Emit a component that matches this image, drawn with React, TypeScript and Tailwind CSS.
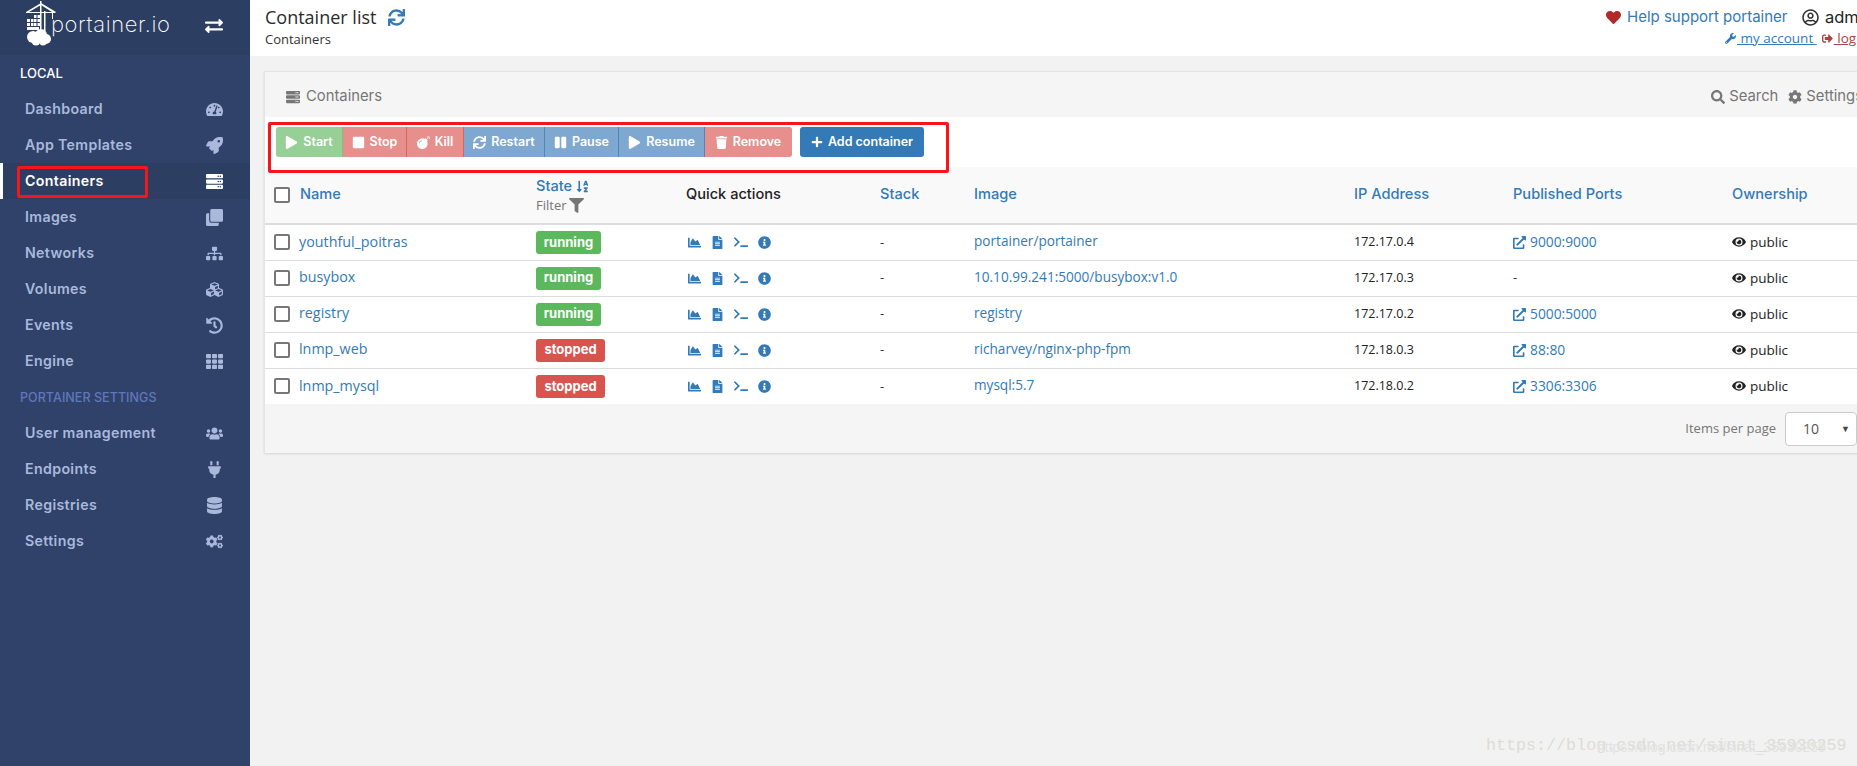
import type { ReactNode } from "react";
import {
  FaBomb,
  FaChartArea,
  FaClone,
  FaCog,
  FaCogs,
  FaCubes,
  FaDatabase,
  FaExchangeAlt,
  FaExternalLinkAlt,
  FaEye,
  FaFileAlt,
  FaFilter,
  FaHeart,
  FaHistory,
  FaInfoCircle,
  FaPause,
  FaPlay,
  FaPlug,
  FaPlus,
  FaRegUserCircle,
  FaRocket,
  FaSearch,
  FaServer,
  FaSignOutAlt,
  FaSitemap,
  FaSortAlphaDown,
  FaStop,
  FaSync,
  FaTachometerAlt,
  FaTerminal,
  FaTh,
  FaTrash,
  FaUsers,
  FaWrench,
} from "react-icons/fa";

const mainNav = [
  { label: "Dashboard", icon: <FaTachometerAlt /> },
  { label: "App Templates", icon: <FaRocket /> },
  { label: "Containers", icon: <FaServer />, active: true },
  { label: "Images", icon: <FaClone /> },
  { label: "Networks", icon: <FaSitemap /> },
  { label: "Volumes", icon: <FaCubes /> },
  { label: "Events", icon: <FaHistory /> },
  { label: "Engine", icon: <FaTh /> },
];

const settingsNav = [
  { label: "User management", icon: <FaUsers /> },
  { label: "Endpoints", icon: <FaPlug /> },
  { label: "Registries", icon: <FaDatabase /> },
  { label: "Settings", icon: <FaCogs /> },
];

const actions = [
  { label: "Start", icon: <FaPlay />, width: "w-[67px]", color: "bg-[#96d096] border-[#7cc47c]" },
  { label: "Stop", icon: <FaStop />, width: "w-[64px]", color: "bg-[#e68f8c] border-[#d9635f]" },
  { label: "Kill", icon: <FaBomb />, width: "w-[57px]", color: "bg-[#e68f8c] border-[#d9635f]" },
  { label: "Restart", icon: <FaSync />, width: "w-[81px]", color: "bg-[#7ea8d0] border-[#4f86bb]" },
  { label: "Pause", icon: <FaPause />, width: "w-[74px]", color: "bg-[#7ea8d0] border-[#4f86bb]" },
  { label: "Resume", icon: <FaPlay />, width: "w-[86px]", color: "bg-[#7ea8d0] border-[#4f86bb]" },
  { label: "Remove", icon: <FaTrash />, width: "w-[87px]", color: "bg-[#e68f8c] border-[#e68f8c]" },
];

const containers = [
  { name: "youthful_poitras", state: "running", image: "portainer/portainer", ip: "172.17.0.4", port: "9000:9000" },
  { name: "busybox", state: "running", image: "10.10.99.241:5000/busybox:v1.0", ip: "172.17.0.3", port: "" },
  { name: "registry", state: "running", image: "registry", ip: "172.17.0.2", port: "5000:5000" },
  { name: "lnmp_web", state: "stopped", image: "richarvey/nginx-php-fpm", ip: "172.18.0.3", port: "88:80" },
  { name: "lnmp_mysql", state: "stopped", image: "mysql:5.7", ip: "172.18.0.2", port: "3306:3306" },
];

function Logo() {
  return (
    <div className="flex items-start">
      <svg width="32" height="46" viewBox="0 0 32 46" className="mt-[1px] ml-[25px]" fill="white">
        <path d="M1 11 L16 2 L31 11 L30 12 L1 12 Z M4 11 L27 11 L16 4 Z" fillRule="evenodd" />
        <rect x="15" y="0" width="1.5" height="30" />
        <rect x="19" y="10" width="1.5" height="20" />
        <rect x="27" y="11" width="1" height="7" />
        <path d="M9 14h2.5v3H9zM12.5 14H15v3h-2.5zM2 18h3v3H2zM6 18h2.5v3H6zM9 18h2.5v3H9zM12.5 18H15v3h-2.5zM2 22h3v3H2zM6 22h2.5v3H6zM9 22h2.5v3H9zM12.5 22H15v3h-2.5zM2 26h12v3H2z" />
        <circle cx="8" cy="36" r="6" />
        <circle cx="16" cy="34" r="6" />
        <circle cx="21" cy="38" r="5" />
        <circle cx="11" cy="40" r="4.5" />
        <circle cx="18" cy="41" r="3.5" />
      </svg>
      <span className="mt-[10px] ml-[-6px] font-['Inter',sans-serif] text-[22px] leading-[28px] font-extralight tracking-[0.6px] text-white">
        portainer.io
      </span>
    </div>
  );
}

function NavItem({ label, icon, active }: { label: string; icon: ReactNode; active?: boolean }) {
  return (
    <div
      className={`flex h-9 items-center justify-between border-l-[3px] pl-[22px] pr-[26px] text-[14.2px] font-semibold tracking-[0.35px] ${
        active ? "border-white bg-[#2d3e63] text-white" : "border-transparent text-[#a9b9dc]"
      }`}
    >
      <span>{label}</span>
      <span className={`flex w-[20px] justify-center text-[17px] ${active ? "text-white" : "text-[#a9b9dc]"}`}>{icon}</span>
    </div>
  );
}

function Sidebar() {
  return (
    <aside className="relative w-[250px] shrink-0 bg-[#30426a] font-['Inter',sans-serif]">
      <div className="flex h-[55px] items-start justify-between bg-[#2d3e63] pr-[26px]">
        <Logo />
        <FaExchangeAlt className="mt-[17px] mr-[1px] text-[18px] text-white" />
      </div>
      <div className="flex h-9 items-center pt-[2px] pl-[20px] text-[13px] font-medium text-white">LOCAL</div>
      {mainNav.map((item) => (
        <NavItem key={item.label} {...item} />
      ))}
      <div className="flex h-9 items-center pt-[2px] pl-[20px] text-[12.5px] font-medium tracking-[0.05px] text-[#5f78bb]">
        PORTAINER SETTINGS
      </div>
      {settingsNav.map((item) => (
        <NavItem key={item.label} {...item} />
      ))}
      <div className="absolute top-[166px] left-[17px] h-[32px] w-[131px] rounded-[2px] border-[3px] border-[#f5161b]" />
    </aside>
  );
}

function PageHeader() {
  return (
    <header className="flex h-[56px] shrink-0 justify-between bg-white pl-[15px]">
      <div>
        <div className="mt-[5px] flex items-center gap-[12px] font-['Open_Sans',sans-serif] text-[18px] leading-[24px] text-[#2b2b2b]">
          Container list
          <FaSync className="text-[17px] text-[#337ab7]" />
        </div>
        <div className="mt-[2px] font-['Open_Sans',sans-serif] text-[13px] leading-[16px] text-[#333]">Containers</div>
      </div>
      <div className="w-[251px] shrink-0 font-['Inter',sans-serif]">
        <div className="mt-[7px] flex h-[20px] items-center whitespace-nowrap text-[15px]">
          <FaHeart className="shrink-0 text-[15px] text-[#b02a2a]" />
          <span className="ml-[6px] w-[175px] shrink-0 text-[#337ab7]">Help support portainer</span>
          <FaRegUserCircle className="shrink-0 text-[17px] text-[#333]" />
          <span className="ml-[6px] shrink-0 text-[16.5px] text-[#222]">admin</span>
        </div>
        <div className="mt-[1px] flex h-[20px] items-center pl-[119px] font-['Open_Sans',sans-serif] text-[13.5px] whitespace-nowrap">
          <FaWrench className="shrink-0 text-[11px] text-[#337ab7]" />
          <span className="ml-[1px] shrink-0 text-[#337ab7] underline">&nbsp;my account&nbsp;</span>
          <FaSignOutAlt className="ml-[5px] shrink-0 text-[11px] text-[#a94442]" />
          <span className="ml-[1px] shrink-0 text-[#a94442] underline">&nbsp;log out</span>
        </div>
      </div>
    </header>
  );
}

function Toolbar() {
  return (
    <div className="relative flex h-[50px] bg-white pt-[10px] pl-[11px] font-['Inter',sans-serif]">
      <div className="flex h-[30px]">
        {actions.map((action, index) => (
          <div
            key={action.label}
            className={`flex items-center justify-center gap-[5px] border-r text-[12.5px] font-semibold text-white ${action.width} ${action.color} ${
              index === 0 ? "rounded-l-[3px]" : ""
            } ${index === actions.length - 1 ? "rounded-r-[3px]" : ""}`}
          >
            <span className="text-[13px]">{action.icon}</span>
            {action.label}
          </div>
        ))}
      </div>
      <div className="ml-[8px] flex h-[30px] w-[124px] items-center justify-center gap-[5px] rounded-[3px] bg-[#337ab7] text-[12.5px] font-semibold text-white">
        <FaPlus className="text-[12px]" />
        Add container
      </div>
      <div className="absolute top-[5px] left-[3px] h-[51px] w-[681px] rounded-[2px] border-[3px] border-[#f5161b]" />
    </div>
  );
}

function Checkbox() {
  return <span className="block h-4 w-4 shrink-0 rounded-[2px] border-2 border-[#777] bg-white" />;
}

function QuickActions() {
  return (
    <div className="flex items-center pl-[2px] text-[#337ab7]">
      <FaChartArea className="text-[13px]" />
      <FaFileAlt className="ml-[10px] text-[13px]" />
      <FaTerminal className="ml-[10px] text-[14px]" />
      <FaInfoCircle className="ml-[10px] text-[13px]" />
    </div>
  );
}

function ContainerTable() {
  return (
    <table className="w-[1635px] table-fixed border-collapse font-['Inter',sans-serif] text-[13px]">
      <thead>
        <tr className="h-[57px] border-b-2 border-[#dddddd] bg-[#f9f9f9] text-left text-[14.6px] font-medium text-[#337ab7]">
          <th className="w-[263px] pl-[9px] font-medium">
            <div className="flex items-center gap-[10px]">
              <Checkbox />
              Name
            </div>
          </th>
          <th className="w-[150px] pl-[8px] font-medium">
            <div className="flex items-center gap-[4px] leading-[20px]">
              State
              <FaSortAlphaDown className="text-[13px]" />
            </div>
            <div className="flex items-center gap-[2px] font-['Open_Sans',sans-serif] text-[13px] leading-[18px] font-normal text-[#767676]">
              Filter
              <FaFilter className="text-[15px]" />
            </div>
          </th>
          <th className="w-[194px] pl-[8px] font-medium text-[#222]">Quick actions</th>
          <th className="w-[94px] pl-[8px] font-medium">Stack</th>
          <th className="w-[380px] pl-[8px] font-medium">Image</th>
          <th className="w-[159px] pl-[8px] font-medium">IP Address</th>
          <th className="w-[219px] pl-[8px] font-medium">Published Ports</th>
          <th className="pl-[8px] font-medium">Ownership</th>
        </tr>
      </thead>
      <tbody className="bg-white font-['Open_Sans',sans-serif]">
        {containers.map((container) => (
          <tr key={container.name} className="h-9 border-b border-[#dddddd] last:border-b-0">
            <td className="pl-[9px]">
              <div className="flex items-center gap-[9px] text-[14.3px] text-[#337ab7]">
                <Checkbox />
                <span className="pb-[2px]">{container.name}</span>
              </div>
            </td>
            <td className="pl-[8px]">
              <span
                className={`inline-flex h-[23px] items-center rounded-[3px] font-['Inter',sans-serif] text-[13px] font-bold text-white ${
                  container.state === "running" ? "w-[65px] justify-center bg-[#5cb85c]" : "w-[69px] justify-center bg-[#d9534f]"
                }`}
              >
                {container.state}
              </span>
            </td>
            <td className="pl-[8px]">
              <QuickActions />
            </td>
            <td className="pl-[8px] text-[#333]">-</td>
            <td className="pb-[2px] pl-[8px] text-[13.6px] text-[#337ab7]">{container.image}</td>
            <td className="pl-[8px] text-[12.5px] text-[#222]">{container.ip}</td>
            <td className="pl-[8px]">
              {container.port ? (
                <div className="flex items-center gap-[4px] text-[13.8px] text-[#337ab7]">
                  <FaExternalLinkAlt className="text-[13px]" />
                  {container.port}
                </div>
              ) : (
                <span className="text-[#333]">-</span>
              )}
            </td>
            <td className="pl-[8px]">
              <div className="flex items-center gap-[4px] text-[13.5px] text-[#222]">
                <FaEye className="text-[14px]" />
                public
              </div>
            </td>
          </tr>
        ))}
      </tbody>
    </table>
  );
}

function ContainerCard() {
  return (
    <section className="ml-[14px] mt-[15px] w-[1636px] border-t border-l border-[#e5e5e5] shadow-[0_1px_2px_rgba(0,0,0,0.12)]">
      <div className="flex h-[45px] items-center justify-between bg-[#f5f5f5] pt-[4px] pr-[37px] pl-[21px] font-['Inter',sans-serif] text-[14.8px] text-[#767676]">
        <div className="flex items-center gap-[6px]">
          <FaServer className="text-[14px]" />
          Containers
        </div>
        <div className="flex items-center whitespace-nowrap">
          <FaSearch className="text-[14px]" />
          <span className="ml-[4px]">Search</span>
          <FaCog className="ml-[10px] text-[14px]" />
          <span className="ml-[4px]">Settings</span>
        </div>
      </div>
      <Toolbar />
      <ContainerTable />
      <div className="flex h-[49px] items-center justify-end bg-[#f5f5f5] pr-[43px] font-['Open_Sans',sans-serif] text-[13px] text-[#767676]">
        <span>Items per page</span>
        <div className="ml-[9px] flex h-[34px] w-[72px] items-center justify-between rounded-[4px] border border-[#cccccc] bg-white pr-[6px] pl-[17px] text-[14px] text-[#555]">
          10
          <span className="text-[9px] text-[#444]">▼</span>
        </div>
      </div>
    </section>
  );
}

export default function App() {
  return (
    <div className="relative flex h-[766px] w-[1857px] overflow-hidden bg-[#f2f2f2]">
      <Sidebar />
      <main className="flex min-w-0 flex-1 flex-col overflow-hidden">
        <PageHeader />
        <ContainerCard />
      </main>
      <div className="absolute top-[736px] left-[1486px] font-['Liberation_Mono',monospace] text-[16.7px] leading-[20px] whitespace-nowrap text-[#dedcd6]">
        https://blog.csdn.net/sinat_35930259
      </div>
      <div className="absolute top-[738px] left-[1597px] font-['Liberation_Sans',sans-serif] text-[14px] leading-[18px] whitespace-nowrap text-[#e2e2e2]">
        https://blog.csdn.net/sinat_35930259
      </div>
    </div>
  );
}
